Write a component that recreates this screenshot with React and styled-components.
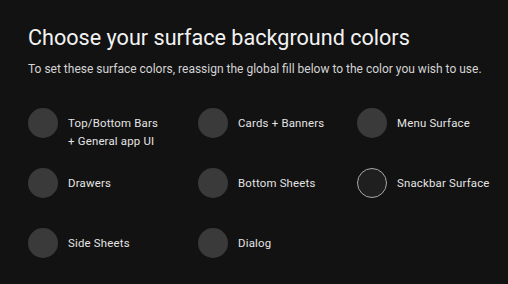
import React from "react";
import styled, { createGlobalStyle } from "styled-components";

const Global = createGlobalStyle`
  html, body { margin: 0; padding: 0; background: #121212; }
  body { font-family: Roboto, "Noto Sans", sans-serif; }
`;

const Page = styled.div`
  width: 508px;
  height: 284px;
  box-sizing: border-box;
  padding: 25px 0 0 28px;
  background: #121212;
  color: #e6e6e6;
  overflow: hidden;
`;

const Title = styled.h1`
  margin: 0;
  font-size: 21.6px;
  line-height: 26px;
  font-weight: 400;
  color: #f2f2f2;
`;

const Subtitle = styled.p`
  margin: 10px 0 0;
  font-size: 12px;
  line-height: 16px;
  color: #d4d4d4;
`;

const Grid = styled.div`
  margin-top: 31px;
  display: grid;
  grid-template-columns: 170px 159px auto;
  grid-auto-rows: 60px;
`;

const Item = styled.div`
  display: flex;
  align-items: flex-start;
  gap: 10px;
`;

const Swatch = styled.div`
  width: 30px;
  height: 30px;
  flex: none;
  border-radius: 50%;
  box-sizing: border-box;
  background: ${(p) => (p.$outlined ? "#1f1f1f" : "#3a3a3a")};
  border: ${(p) => (p.$outlined ? "1px solid #a8a8a8" : "none")};
`;

const Label = styled.div`
  padding-top: 6px;
  font-size: 11.4px;
  line-height: 18px;
  letter-spacing: 0.2px;
  color: #e4e4e4;
`;

const items = [
  { label: ["Top/Bottom Bars", "+ General app UI"] },
  { label: ["Cards + Banners"] },
  { label: ["Menu Surface"] },
  { label: ["Drawers"] },
  { label: ["Bottom Sheets"] },
  { label: ["Snackbar Surface"], outlined: true },
  { label: ["Side Sheets"] },
  { label: ["Dialog"] },
];

export default function App() {
  return (
    <Page>
      <Global />
      <Title>Choose your surface background colors</Title>
      <Subtitle>
        To set these surface colors, reassign the global fill below to the color you wish to use.
      </Subtitle>
      <Grid>
        {items.map((it) => (
          <Item key={it.label[0]}>
            <Swatch $outlined={it.outlined} />
            <Label>
              {it.label.map((l, i) => (
                <div key={i}>{l}</div>
              ))}
            </Label>
          </Item>
        ))}
      </Grid>
    </Page>
  );
}
